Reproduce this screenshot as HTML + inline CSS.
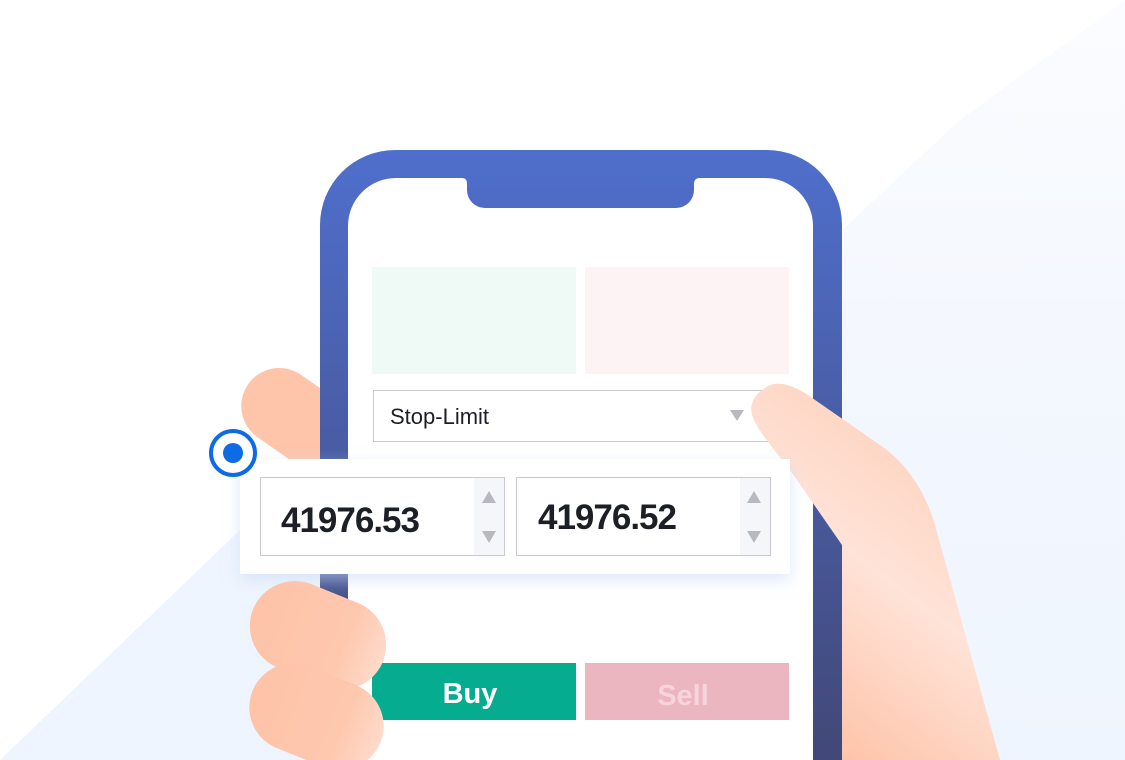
<!DOCTYPE html>
<html><head><meta charset="utf-8"><style>
html,body{margin:0;padding:0;width:1125px;height:760px;overflow:hidden;background:#fff;font-family:"Liberation Sans",sans-serif}
</style></head><body>
<svg width="1125" height="760" viewBox="0 0 1125 760" xmlns="http://www.w3.org/2000/svg" style="position:absolute;left:0;top:0">
<defs>
<linearGradient id="bg" x1="0" y1="0" x2="0" y2="1">
<stop offset="0" stop-color="#fbfcff"/><stop offset="0.5" stop-color="#f3f7fe"/><stop offset="1" stop-color="#eff5fe"/>
</linearGradient>
<linearGradient id="frame" x1="0" y1="0" x2="0" y2="1">
<stop offset="0" stop-color="#4f6fcc"/><stop offset="1" stop-color="#424878"/>
</linearGradient>
<linearGradient id="skin" x1="0" y1="0" x2="1" y2="0">
<stop offset="0" stop-color="#fec3a8"/><stop offset="0.7" stop-color="#fec8ae"/><stop offset="1" stop-color="#ffdacb"/>
</linearGradient>
<linearGradient id="hand" x1="0.3" y1="1" x2="0.7" y2="0.2">
<stop offset="0" stop-color="#fec2a6"/><stop offset="0.6" stop-color="#ffe3d8"/><stop offset="1" stop-color="#fed5c2"/>
</linearGradient>
<filter id="sh" x="-10%" y="-30%" width="120%" height="160%"><feDropShadow dx="0" dy="6" stdDeviation="8" flood-color="#c8d8f5" flood-opacity="0.6"/></filter>
</defs>
<polygon points="1125,0 1125,760 842,760 842,230 960,120" fill="url(#bg)"/>
<polygon points="0,760 240,530 320,530 320,760" fill="#eff5fe"/>
<g transform="rotate(35 285 410)"><rect x="240" y="372" width="130" height="76" rx="38" fill="#fec5aa"/></g>
<path d="M395,150 H767 A75,75 0 0 1 842,225 V760 H320 V225 A75,75 0 0 1 395,150Z" fill="url(#frame)"/>
<path d="M397,178 H462 Q467,178 467,184 V190 A18,18 0 0 0 485,208 H676 A18,18 0 0 0 694,190 V184 Q694,178 700,178 H765 A48,48 0 0 1 813,226 V760 H348 V226 A48,48 0 0 1 397,178Z" fill="#fff"/>
<rect x="372" y="267" width="204" height="107" fill="#effaf7"/>
<rect x="585" y="267" width="204" height="107" fill="#fef3f4"/>
<rect x="373.5" y="390.5" width="415" height="51" fill="#fff" stroke="#c9cad0"/>
<text x="390" y="424" font-size="22" fill="#1d1f26">Stop-Limit</text>
<polygon points="730,410 744,410 737,421" fill="#b7b9c0"/>
<path d="M765,388 C775,380 790,384 805,393 L880,445 C905,462 925,490 935,525 L1000,760 H842 L842,545 L790,470 C772,447 756,428 752,415 C749,403 756,393 765,388Z" fill="url(#hand)"/>
<rect x="240" y="459" width="550" height="115" fill="#fff" filter="url(#sh)"/>
<rect x="260.5" y="477.5" width="244" height="78" fill="#fff" stroke="#c9cad0"/>
<rect x="474" y="478" width="30" height="77" fill="#f5f6fa"/>
<polygon points="482,503 496,503 489,491" fill="#b7b9c0"/>
<polygon points="482,531 496,531 489,543" fill="#b7b9c0"/>
<text x="281" y="532" font-size="35" font-weight="bold" letter-spacing="-1" fill="#1d1f26">41976.53</text>
<rect x="516.5" y="477.5" width="254" height="78" fill="#fff" stroke="#c9cad0"/>
<rect x="740" y="478" width="30" height="77" fill="#f5f6fa"/>
<polygon points="747,503 761,503 754,491" fill="#b7b9c0"/>
<polygon points="747,531 761,531 754,543" fill="#b7b9c0"/>
<text x="538" y="529" font-size="35" font-weight="bold" letter-spacing="-1" fill="#1d1f26">41976.52</text>
<circle cx="233" cy="453" r="22" fill="#fff" stroke="#0d6be6" stroke-width="4"/>
<circle cx="233" cy="453" r="10" fill="#0d6be6"/>
<rect x="372" y="663" width="204" height="57" fill="#05ac8f"/>
<text x="470" y="703" font-size="29" font-weight="bold" fill="#fff" text-anchor="middle">Buy</text>
<rect x="585" y="663" width="204" height="57" fill="#ecb6c0"/>
<text x="683" y="705" font-size="29" font-weight="bold" fill="#f7d4db" text-anchor="middle">Sell</text>
<g transform="rotate(22 318 630)"><rect x="250" y="590" width="140" height="90" rx="45" fill="url(#skin)"/></g>
<g transform="rotate(22 315 715)"><rect x="248" y="672" width="138" height="88" rx="44" fill="url(#skin)"/></g>
</svg>
</body></html>
